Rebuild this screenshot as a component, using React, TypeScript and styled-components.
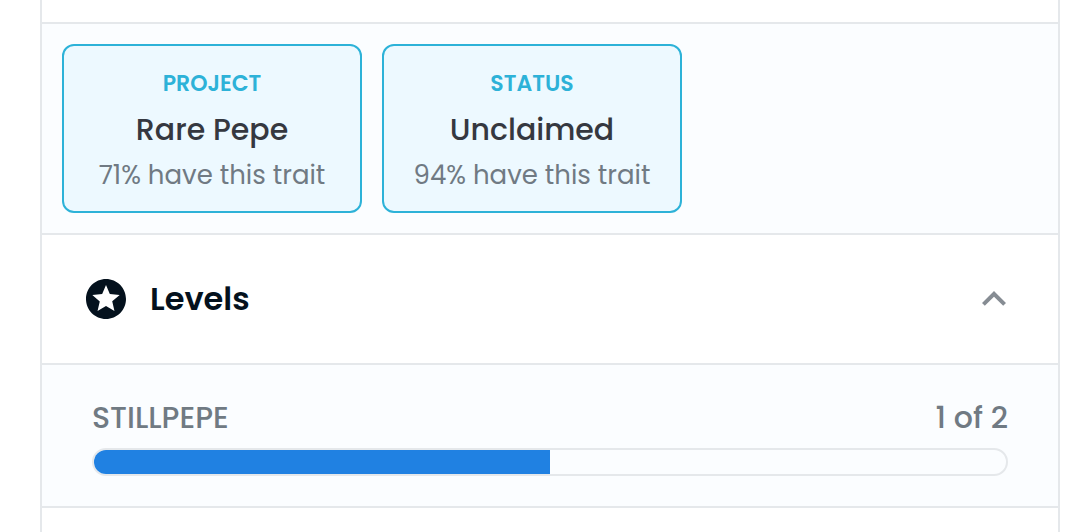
import React from "react";
import styled, { createGlobalStyle } from "styled-components";

const Global = createGlobalStyle`
  *, *::before, *::after { box-sizing: border-box; }
  body { margin: 0; background: #fff; color: #04111d; font-family: Poppins, Inter, "Open Sans", sans-serif; overflow-x: hidden; }
`;

const Frame = styled.main`
  margin: 0 18px 0 40px;
  border: 2px solid #e5e8eb;
  border-width: 0 2px;
`;

const Edge = styled.div<{ $height: number }>`
  height: ${(p) => p.$height}px;
`;

const Traits = styled.section`
  display: flex;
  flex-wrap: wrap;
  gap: 20px;
  padding: 20px;
  border: solid #e5e8eb;
  border-width: 2px 0;
  background: #fbfdff;
`;

const TraitCard = styled.a`
  display: flex;
  flex-direction: column;
  align-items: center;
  width: 300px;
  padding: 22px 8px 21px;
  border: 2px solid #2db2d8;
  border-radius: 12px;
  background: #edf9ff;
  text-decoration: none;
  white-space: nowrap;
`;

const TraitType = styled.span`
  color: #2db2d8;
  font-size: 22px;
  font-weight: 600;
  line-height: 32px;
`;

const TraitValue = styled.span`
  color: #353840;
  font-size: 30px;
  font-weight: 500;
  line-height: 60px;
`;

const TraitRarity = styled.span`
  color: #707a83;
  font-size: 26px;
  line-height: 30px;
`;

const Heading = styled.h2`
  margin: 0;
  font-size: inherit;
`;

const PanelToggle = styled.button`
  display: flex;
  align-items: center;
  gap: 24px;
  width: 100%;
  height: 128px;
  padding: 0 52px 0 44px;
  border: 0;
  background: #fff;
  color: #04111d;
  font: inherit;
  text-align: left;
  cursor: pointer;
`;

const PanelTitle = styled.span`
  flex: 1;
  font-size: 32px;
  font-weight: 600;
`;

const Levels = styled.section`
  padding: 33px 50px 30px;
  border: solid #e5e8eb;
  border-width: 2px 0;
  background: #fbfdff;
`;

const LevelRow = styled.div`
  display: flex;
  justify-content: space-between;
  margin-bottom: 10px;
  color: #707a83;
  font-size: 30px;
  font-weight: 500;
  line-height: 40px;
`;

const Track = styled.div`
  height: 28px;
  overflow: hidden;
  border: 2px solid #e5e8eb;
  border-radius: 14px;
`;

const Fill = styled.div`
  height: 100%;
  background: #2081e2;
`;

const traits = [
  { type: "PROJECT", value: "Rare Pepe", rarity: "71% have this trait" },
  { type: "STATUS", value: "Unclaimed", rarity: "94% have this trait" },
];

const StarIcon = () => (
  <svg width="40" height="40" viewBox="2 2 20 20" fill="currentColor" aria-hidden="true">
    <path d="M11.99 2C6.47 2 2 6.48 2 12s4.47 10 9.99 10C17.52 22 22 17.52 22 12S17.52 2 11.99 2zm4.24 16L12 15.45 7.77 18l1.12-4.81-3.73-3.23 4.92-.42L12 5l1.92 4.53 4.92.42-3.73 3.23L16.23 18z" />
  </svg>
);

const ChevronUp = () => (
  <svg width="24" height="16" viewBox="6 8 12 8" fill="#868c93" aria-hidden="true">
    <path d="M12 8l-6 6 1.41 1.41L12 10.83l4.59 4.58L18 14z" />
  </svg>
);

export default function App() {
  const [open, setOpen] = React.useState(true);
  const level = 1;
  const max = 2;
  return (
    <>
      <Global />
      <Frame>
        <Edge $height={22} />
        <Traits>
          {traits.map((t) => (
            <TraitCard key={t.type} href="#">
              <TraitType>{t.type}</TraitType>
              <TraitValue>{t.value}</TraitValue>
              <TraitRarity>{t.rarity}</TraitRarity>
            </TraitCard>
          ))}
        </Traits>
        <Heading>
          <PanelToggle aria-expanded={open} onClick={() => setOpen(!open)}>
            <StarIcon />
            <PanelTitle>Levels</PanelTitle>
            <ChevronUp />
          </PanelToggle>
        </Heading>
        {open && (
          <Levels>
            <LevelRow>
              <span id="level-name">STILLPEPE</span>
              <span>{level} of {max}</span>
            </LevelRow>
            <Track role="progressbar" aria-labelledby="level-name" aria-valuenow={level} aria-valuemax={max}>
              <Fill style={{ width: `${(level / max) * 100}%` }} />
            </Track>
          </Levels>
        )}
        <Edge $height={24} />
      </Frame>
    </>
  );
}
